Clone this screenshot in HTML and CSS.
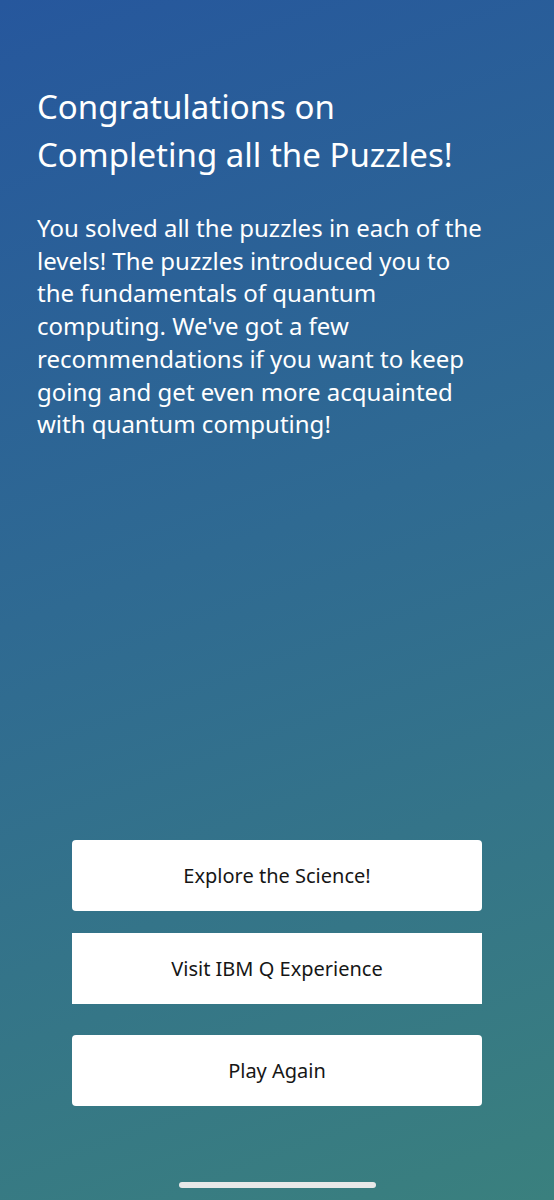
FILE: index.html
```html
<!DOCTYPE html>
<html lang="en">
<head>
<meta charset="utf-8">
<title>Congratulations</title>
<link rel="stylesheet" href="styles.css">
</head>
<body>
<main class="screen">
  <section class="intro">
    <h1 class="title">Congratulations on Completing all the Puzzles!</h1>
    <p class="text">You solved all the puzzles in each of the levels! The puzzles introduced you to the fundamentals of quantum computing. We've got a few recommendations if you want to keep going and get even more acquainted with quantum computing!</p>
  </section>
  <nav class="actions">
    <button class="btn">Explore the Science!</button>
    <button class="btn btn-square">Visit IBM Q Experience</button>
    <button class="btn btn-last">Play Again</button>
  </nav>
  <div class="home-bar"></div>
</main>
</body>
</html>
```
FILE: styles.css
```css
html, body {
  margin: 0;
  padding: 0;
}
body {
  font-family: "Noto Sans", "Open Sans", sans-serif;
}
.screen {
  box-sizing: border-box;
  width: 554px;
  height: 1200px;
  display: flex;
  flex-direction: column;
  background: linear-gradient(160deg, #26579d 0%, #2f6a92 45%, #3a807e 100%);
  overflow: hidden;
}
.intro {
  width: 452px;
  padding: 83px 0 0 37px;
}
.title {
  margin: 0;
  color: #ffffff;
  font-weight: 400;
  font-size: 33px;
  line-height: 48px;
}
.text {
  margin: 33px 0 0 0;
  color: #ffffff;
  font-size: 24px;
  line-height: 32.7px;
}
.actions {
  margin-top: auto;
  display: flex;
  flex-direction: column;
  gap: 22px;
  padding: 0 72px;
}
.btn {
  height: 71px;
  border: none;
  background: #ffffff;
  border-radius: 4px;
  color: #161616;
  font-family: inherit;
  font-size: 20px;
  padding: 0;
}
.btn-square {
  border-radius: 0;
}
.btn-last {
  margin-top: 9px;
}
.home-bar {
  align-self: center;
  width: 197px;
  height: 6px;
  border-radius: 3px;
  background: #e8e8e8;
  margin: 76px 0 12px 0;
}
```
